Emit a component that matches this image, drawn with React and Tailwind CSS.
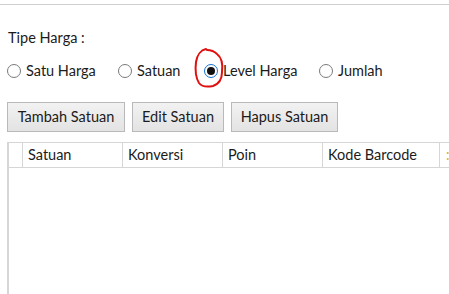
import React from "react";

// ─── data ─────────────────────────────────────────────────────────────
const OPTIONS = [
  { label: "Satu Harga", w: "w-[111px]" },
  { label: "Satuan", w: "w-[86px]" },
  { label: "Level Harga", w: "w-[115px]" },
  { label: "Jumlah", w: "w-[70px]" },
];
const SELECTED = "Level Harga";

const BUTTONS = [
  { label: "Tambah Satuan", w: "w-[118px]" },
  { label: "Edit Satuan", w: "w-[92px]" },
  { label: "Hapus Satuan", w: "w-[107px]" },
];

const COLS = [
  { label: "", w: "w-[14px]" },
  { label: "Satuan", w: "w-[100px]" },
  { label: "Konversi", w: "w-[100px]" },
  { label: "Poin", w: "w-[100px]" },
  { label: "Kode Barcode", w: "w-[117px]" },
];

function Radio({ label, checked, w }) {
  return (
    <label className={`flex items-center gap-[5px] ${w} shrink-0`}>
      {checked ? (
        <span className="w-[14px] h-[14px] rounded-full border border-[#1572d3] bg-white flex items-center justify-center shrink-0">
          <span className="w-[8px] h-[8px] rounded-full bg-[#111]" />
        </span>
      ) : (
        <span className="w-[14px] h-[14px] rounded-full border border-[#7a7a7a] bg-white shrink-0" />
      )}
      <span>{label}</span>
    </label>
  );
}

export default function App() {
  return (
    <div
      className="relative w-[449px] h-[294px] overflow-hidden bg-white text-[14.5px] text-[#1b1b1b]"
      style={{ fontFamily: 'Lato, "Open Sans", sans-serif' }}
    >
      {/* top rule */}
      <div className="mt-[4px] h-px bg-[#cfcfcf]" />

      <div className="pl-[7px] pt-[23px]">
        <p className="pl-[1px] leading-[20px]">Tipe Harga :</p>

        {/* price type radios */}
        <div className="flex items-center mt-[13px] h-[20px]">
          {OPTIONS.map((o) => (
            <Radio key={o.label} label={o.label} w={o.w} checked={o.label === SELECTED} />
          ))}
        </div>

        {/* unit buttons */}
        <div className="flex gap-[7px] mt-[21px]">
          {BUTTONS.map((b) => (
            <button
              key={b.label}
              className={`${b.w} h-[30px] border border-[#b9b9b9] bg-gradient-to-b from-[#f2f2f2] to-[#e3e3e3] text-[#1b1b1b]`}
            >
              {b.label}
            </button>
          ))}
        </div>

        {/* grid */}
        <div className="mt-[10px] border-l-2 border-[#d6d6d6] h-[160px]">
          <div className="flex h-[26px] border-y border-[#d6d6d6]">
            {COLS.map((c) => (
              <div
                key={c.label || "sel"}
                className={`${c.w} shrink-0 border-r border-[#d6d6d6] pl-[5px] flex items-center leading-none`}
              >
                {c.label}
              </div>
            ))}
            <div className="pl-[6px] flex items-center text-[#e8b400]">:</div>
          </div>
        </div>
      </div>

      {/* red hand-drawn annotation */}
      <svg className="absolute left-[190px] top-[45px]" width="40" height="46" viewBox="0 0 40 46" fill="none">
        <path
          d="M16 4 C11 5 7 10 6 17 C5 25 6 33 9 38 C12 42 18 42 23 41 C29 39 32 34 32 27 C33 19 31 12 27 9 C24 6 20 5 17 5"
          stroke="#e01010"
          strokeWidth="2"
          strokeLinecap="round"
        />
      </svg>
    </div>
  );
}
